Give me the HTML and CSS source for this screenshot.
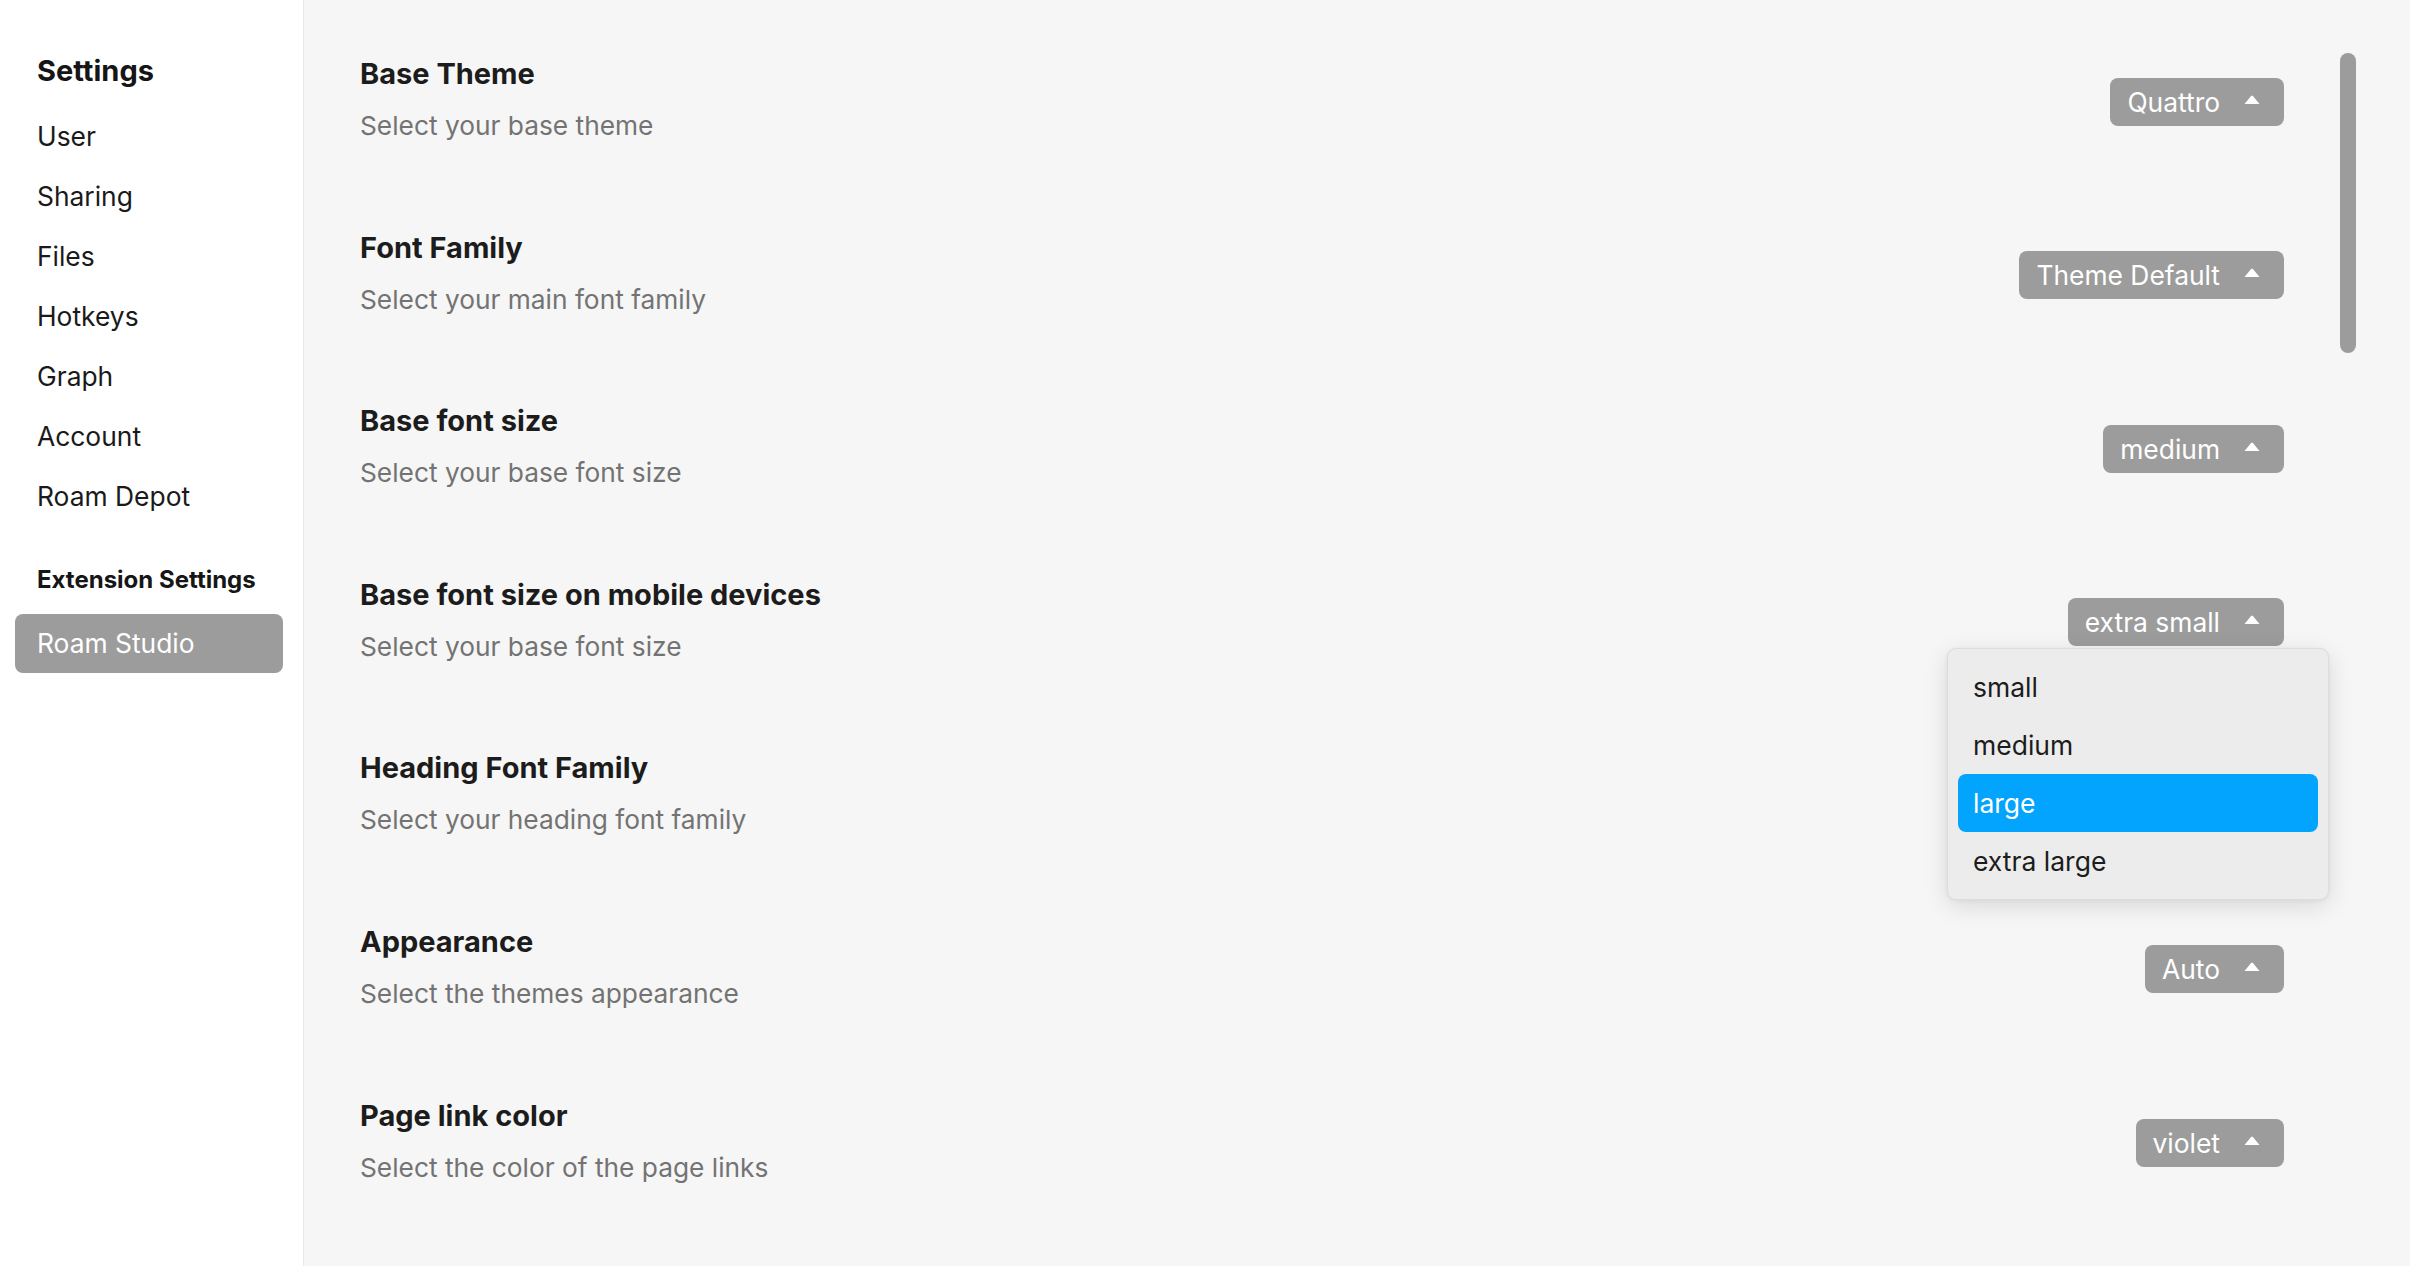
FILE: index.html
```html
<!DOCTYPE html>
<html lang="en">
<head>
<meta charset="utf-8">
<title>Settings</title>
<link rel="stylesheet" href="styles.css">
</head>
<body>
<aside class="sidebar">
  <h2 class="sidebar-title">Settings</h2>
  <nav class="nav">
    <div class="nav-item">User</div>
    <div class="nav-item">Sharing</div>
    <div class="nav-item">Files</div>
    <div class="nav-item">Hotkeys</div>
    <div class="nav-item">Graph</div>
    <div class="nav-item">Account</div>
    <div class="nav-item">Roam Depot</div>
  </nav>
  <h3 class="sidebar-subtitle">Extension Settings</h3>
  <div class="nav-item nav-item-active">Roam Studio</div>
</aside>
<main class="main">
  <div class="scroll-thumb"></div>
  <section class="row">
    <div class="row-text">
      <div class="row-title">Base Theme</div>
      <div class="row-desc">Select your base theme</div>
    </div>
    <div class="select-wrap">
      <button class="select">Quattro <svg class="caret" viewBox="0 0 16 10"><path d="M7.1 0.9 Q8 0 8.9 0.9 L15.5 9 H0.5 Z"/></svg></button>
    </div>
  </section>
  <section class="row">
    <div class="row-text">
      <div class="row-title">Font Family</div>
      <div class="row-desc">Select your main font family</div>
    </div>
    <div class="select-wrap">
      <button class="select">Theme Default <svg class="caret" viewBox="0 0 16 10"><path d="M7.1 0.9 Q8 0 8.9 0.9 L15.5 9 H0.5 Z"/></svg></button>
    </div>
  </section>
  <section class="row">
    <div class="row-text">
      <div class="row-title">Base font size</div>
      <div class="row-desc">Select your base font size</div>
    </div>
    <div class="select-wrap">
      <button class="select">medium <svg class="caret" viewBox="0 0 16 10"><path d="M7.1 0.9 Q8 0 8.9 0.9 L15.5 9 H0.5 Z"/></svg></button>
    </div>
  </section>
  <section class="row">
    <div class="row-text">
      <div class="row-title">Base font size on mobile devices</div>
      <div class="row-desc">Select your base font size</div>
    </div>
    <div class="select-wrap">
      <button class="select">extra small <svg class="caret" viewBox="0 0 16 10"><path d="M7.1 0.9 Q8 0 8.9 0.9 L15.5 9 H0.5 Z"/></svg></button>
      <div class="menu">
        <div class="menu-item">small</div>
        <div class="menu-item">medium</div>
        <div class="menu-item menu-item-active">large</div>
        <div class="menu-item">extra large</div>
      </div>
    </div>
  </section>
  <section class="row row-under">
    <div class="row-text">
      <div class="row-title">Heading Font Family</div>
      <div class="row-desc">Select your heading font family</div>
    </div>
    <div class="select-wrap">
      <button class="select">Theme Default <svg class="caret" viewBox="0 0 16 10"><path d="M7.1 0.9 Q8 0 8.9 0.9 L15.5 9 H0.5 Z"/></svg></button>
    </div>
  </section>
  <section class="row">
    <div class="row-text">
      <div class="row-title">Appearance</div>
      <div class="row-desc">Select the themes appearance</div>
    </div>
    <div class="select-wrap">
      <button class="select">Auto <svg class="caret" viewBox="0 0 16 10"><path d="M7.1 0.9 Q8 0 8.9 0.9 L15.5 9 H0.5 Z"/></svg></button>
    </div>
  </section>
  <section class="row">
    <div class="row-text">
      <div class="row-title">Page link color</div>
      <div class="row-desc">Select the color of the page links</div>
    </div>
    <div class="select-wrap">
      <button class="select">violet <svg class="caret" viewBox="0 0 16 10"><path d="M7.1 0.9 Q8 0 8.9 0.9 L15.5 9 H0.5 Z"/></svg></button>
    </div>
  </section>
</main>
</body>
</html>
```
FILE: styles.css
```css
* { box-sizing: border-box; }

html, body {
  margin: 0;
  height: 100%;
}

body {
  display: flex;
  font-family: Inter, "Noto Sans", "Liberation Sans", sans-serif;
  color: #1c1c1c;
  overflow: hidden;
  background: #f6f6f6;
}

.sidebar {
  width: 304px;
  flex: none;
  background: #ffffff;
  border-right: 1px solid #eaeaea;
  padding-top: 53px;
  display: flex;
  flex-direction: column;
}

.sidebar-title {
  margin: 0 0 16.5px 37px;
  font-size: 29px;
  line-height: 36px;
  font-weight: 700;
  color: #161616;
}

.nav {
  display: flex;
  flex-direction: column;
}

.nav-item {
  height: 60px;
  line-height: 60px;
  padding-left: 37px;
  font-size: 26.4px;
  color: #1a1a1a;
}

.sidebar-subtitle {
  margin: 39px 0 19px 37px;
  font-size: 24px;
  line-height: 30px;
  font-weight: 700;
  color: #161616;
}

.nav-item-active {
  margin-left: 15px;
  width: 268px;
  height: 59px;
  line-height: 59px;
  padding-left: 22px;
  background: #9c9c9c;
  color: #ffffff;
  border-radius: 8px;
}

.main {
  position: relative;
  flex: 1;
  padding: 54px 126px 0 56px;
  background: #f6f6f6;
}

.scroll-thumb {
  position: absolute;
  right: 54px;
  top: 53px;
  width: 16px;
  height: 300px;
  border-radius: 8px;
  background: #9c9c9c;
}

.row {
  display: flex;
  justify-content: space-between;
  align-items: center;
  margin-bottom: 81.6px;
}

.row-title {
  font-size: 29px;
  line-height: 40px;
  font-weight: 700;
  color: #1c1c1c;
}

.row-desc {
  margin-top: 12px;
  font-size: 26.3px;
  line-height: 40px;
  color: #737373;
}

.select-wrap {
  position: relative;
  margin-top: 3px;
}

.select {
  display: flex;
  align-items: center;
  gap: 24px;
  height: 48px;
  padding: 0 24px 0 17px;
  border: none;
  border-radius: 8px;
  background: #9c9c9c;
  color: #ffffff;
  font-family: inherit;
  font-size: 26.4px;
  line-height: 48px;
}

.caret {
  width: 16px;
  height: 10px;
  fill: #ffffff;
  margin-top: -4px;
}

.menu {
  position: absolute;
  z-index: 2;
  top: calc(100% + 2px);
  right: -45px;
  width: 382px;
  padding: 9px 10px;
  background: #ececec;
  border: 1px solid #dcdcdc;
  border-radius: 9px;
  box-shadow: 0 6px 24px rgba(0, 0, 0, 0.12), 0 1px 4px rgba(0, 0, 0, 0.05);
}

.menu-item {
  height: 58px;
  line-height: 58px;
  padding-left: 15px;
  font-size: 26.5px;
  color: #1c1c1c;
  border-radius: 8px;
}

.menu-item-active {
  background: #03a4fd;
  color: #ffffff;
}
```
